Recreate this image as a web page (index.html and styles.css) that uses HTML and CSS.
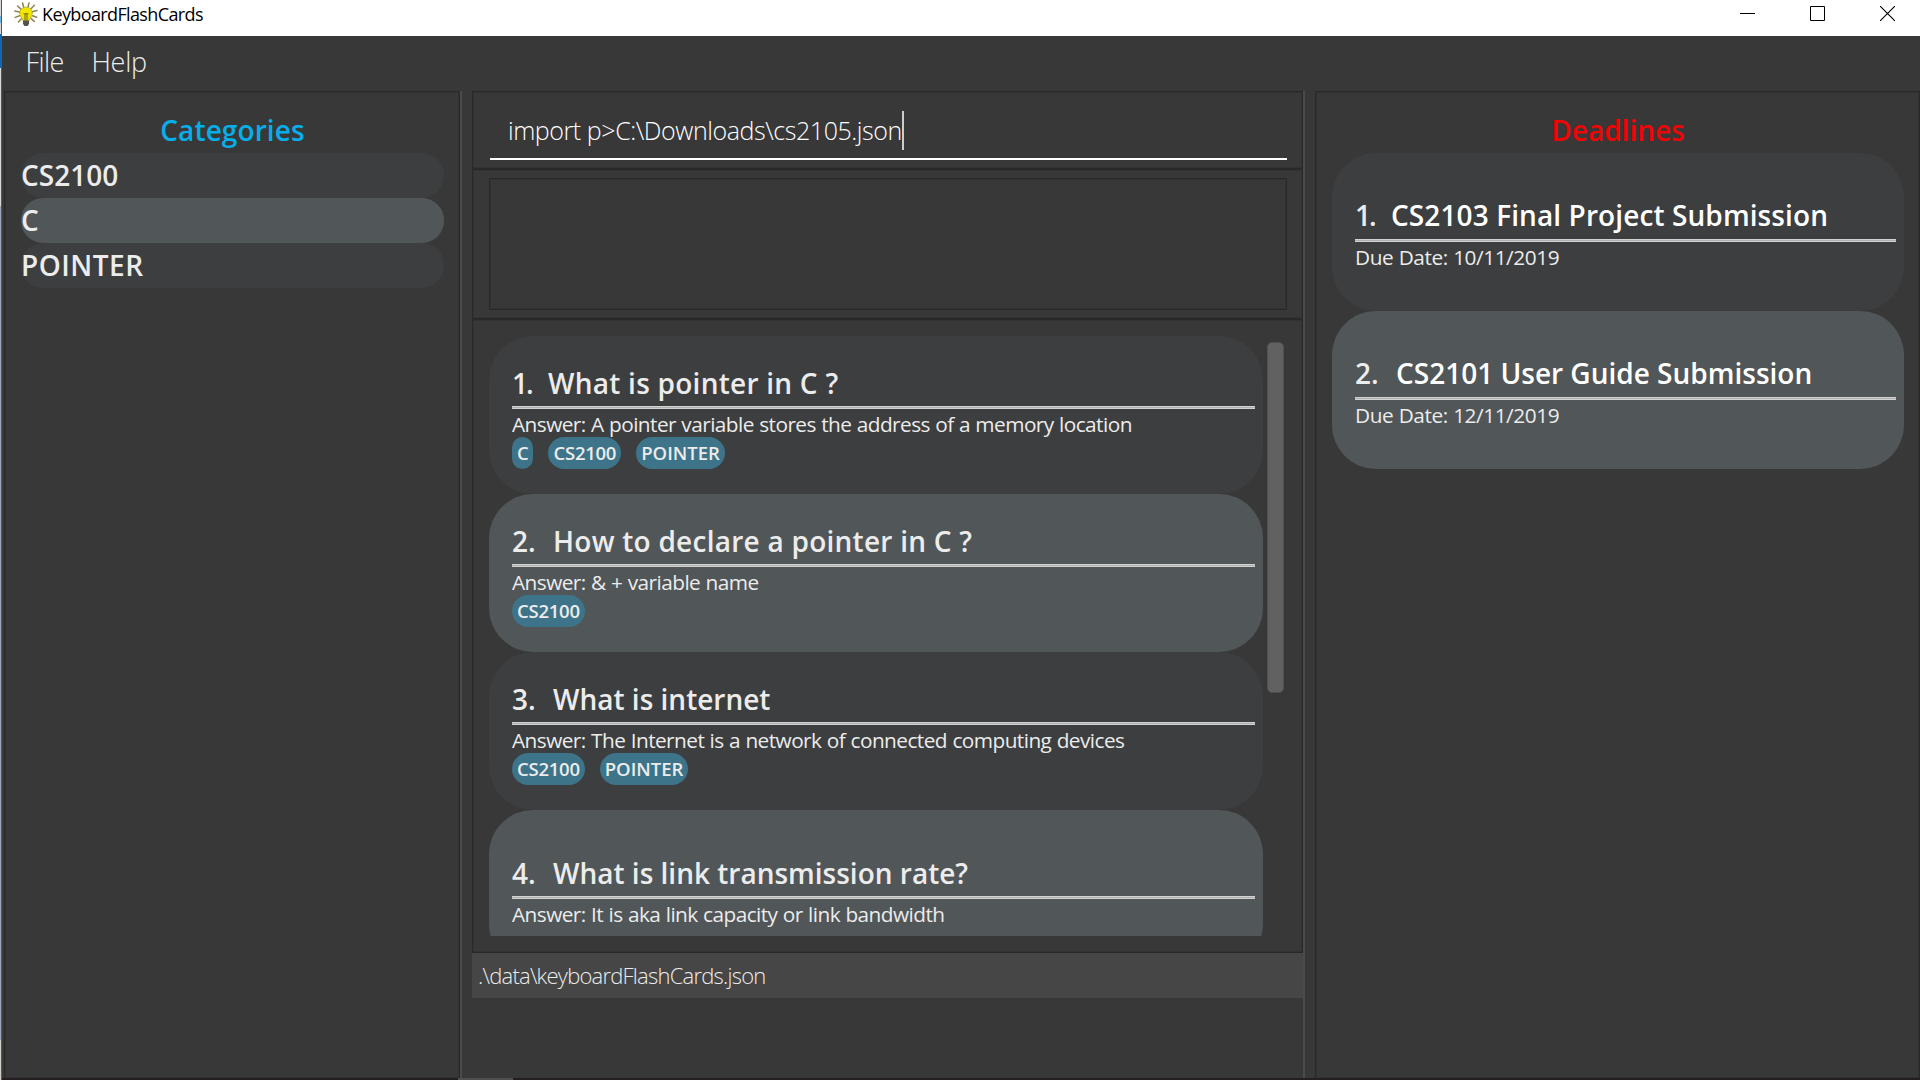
FILE: index.html
```html
<!DOCTYPE html>
<html lang="en">
<head>
<meta charset="utf-8">
<title>KeyboardFlashCards</title>
<link rel="stylesheet" href="styles.css">
</head>
<body>
<div class="desktop-edge"></div>
<div class="window">
  <header class="titlebar">
    <svg class="app-icon" width="24" height="24" viewBox="0 0 24 24">
      <g stroke="#8f8550" stroke-width="1.5" stroke-linecap="round">
        <path d="M8.6 1l1 4M15 1l-1 4M3.6 4l3.6 3.4M20.4 3.2L17 6.8M.8 9l4.6 1M23 8.6l-4.6 1.2M1.2 15.4l4.4-1.6M22.6 15.2l-4-1.4M4.4 20l3-3.2M20.2 19.4l-3.2-3"/>
      </g>
      <path d="M12 5.2c-3.8 0-6.3 2.6-6.3 5.9 0 3.8 3 4.7 3.5 8h5.6c.5-3.3 3.5-4.2 3.5-8 0-3.3-2.5-5.9-6.3-5.9z" fill="#f3e600" stroke="#a89d1c" stroke-width=".7"/>
      <path d="M9.600 11l1.400 1.600 1-1.600 1 1.600 1.400-1.600M11 12.600v6M13 12.600v6" fill="none" stroke="#6e6614" stroke-width="1"/>
      <path d="M9 18.600h6v3.200L13.600 24h-3.200L9 21.800z" fill="#55524a"/>
    </svg>
    <span class="app-title">KeyboardFlashCards</span>
    <div class="window-buttons">
      <svg width="15" height="15" viewBox="0 0 15 15"><path d="M0 7.500h15" stroke="#000"/></svg>
      <svg width="15" height="15" viewBox="0 0 15 15"><path d="M.5.500h14v14H.5z" fill="none" stroke="#000"/></svg>
      <svg width="15" height="15" viewBox="0 0 15 15"><path d="M0 0l15 15M15 0L0 15" stroke="#000" stroke-width="1.100"/></svg>
    </div>
  </header>
  <nav class="menubar"><span class="menu-file">File</span><span class="menu-help">Help</span></nav>
  <main class="panes">
    <section class="pane side-pane categories">
      <h2 class="pane-title blue">Categories</h2>
      <ul class="category-list">
        <li>CS2100</li>
        <li class="alt">C</li>
        <li class="wide">POINTER</li>
      </ul>
    </section>
    <div class="divider"></div>
    <section class="center">
      <div class="pane command">
        <div class="command-field"><span class="command-text">import p&gt;C:\Downloads\cs2105.json</span><i class="caret"></i></div>
      </div>
      <div class="pane result"><div class="pane result-box"></div></div>
      <div class="pane flashcards">
        <div class="card-list">
          <article class="card">
            <h3 class="card-title wider"><span class="num one">1.</span>What is pointer in C ?</h3>
            <p class="card-text">Answer: A pointer variable stores the address of a memory location</p>
            <div class="tags"><span class="tag">C</span><span class="tag">CS2100</span><span class="tag long">POINTER</span></div>
          </article>
          <article class="card alt">
            <h3 class="card-title wider"><span class="num">2.</span>How to declare a pointer in C ?</h3>
            <p class="card-text">Answer: &amp; + variable name</p>
            <div class="tags"><span class="tag">CS2100</span></div>
          </article>
          <article class="card">
            <h3 class="card-title"><span class="num">3.</span>What is internet</h3>
            <p class="card-text">Answer: The Internet is a network of connected computing devices</p>
            <div class="tags"><span class="tag">CS2100</span><span class="tag long">POINTER</span></div>
          </article>
          <article class="card alt roomy">
            <h3 class="card-title"><span class="num">4.</span>What is link transmission rate?</h3>
            <p class="card-text">Answer: It is aka link capacity or link bandwidth</p>
          </article>
        </div>
        <div class="scroll-thumb"></div>
      </div>
      <footer class="statusbar">.\data\keyboardFlashCards.json</footer>
    </section>
    <div class="divider"></div>
    <section class="pane side-pane deadlines">
      <h2 class="pane-title red">Deadlines</h2>
      <article class="card roomy">
        <h3 class="card-title bright wide-title"><span class="num one">1.</span>CS2103 Final Project Submission</h3>
        <p class="card-text">Due Date: 10/11/2019</p>
      </article>
      <article class="card alt roomy">
        <h3 class="card-title bright"><span class="num">2.</span>CS2101 User Guide Submission</h3>
        <p class="card-text">Due Date: 12/11/2019</p>
      </article>
    </section>
  </main>
  <div class="taskbar-edge"><i></i></div>
</div>
</body>
</html>
```
FILE: styles.css
```css
* { box-sizing: border-box; margin: 0; padding: 0; }
body {
  display: flex;
  width: 1920px;
  height: 1080px;
  overflow: hidden;
  background: #383838;
  font-family: "Open Sans", "Noto Sans", sans-serif;
  color: #ececec;
}
.desktop-edge {
  width: 2px;
  border-right: 1px solid #55585a;
  background: linear-gradient(#d5d8da 0 16px, #6fb0dc 16px 23px, #d5d8da 23px 34px, #0f66b4 34px 68px, #d6d6d4 68px 206px, #9aa6b8 206px 1040px, #d0d0c8 1040px);
}
.window { flex: 1; min-width: 0; display: flex; flex-direction: column; }

.titlebar {
  display: flex;
  align-items: flex-start;
  height: 36px;
  padding: 1px 25px 0 12px;
  background: #fff;
  color: #000;
}
.app-icon { margin-top: 1px; }
.app-title { margin-left: 3px; padding-left: 1px; font-size: 18px; line-height: 26px; letter-spacing: -0.62px; }
.window-buttons { display: flex; gap: 55px; margin-left: auto; padding-top: 5px; }

.menubar {
  display: flex;
  height: 55px;
  padding: 5px 0 0 23.5px;
  font-size: 27px;
  font-weight: 300;
  line-height: 42px;
}
.menu-file { width: 66px; letter-spacing: -0.6px; }
.menu-help { letter-spacing: -0.3px; }

.panes { display: flex; flex: 1; min-height: 0; padding-left: 2px; }
.pane { border: 1px solid #292929; box-shadow: inset 0 0 0 1px #323232; }
.divider { width: 2px; margin-right: 10px; background: #4b4b4b; }
.side-pane { border-bottom: 0; }
.categories { width: 456px; padding: 18px 15px 0 16px; }
.deadlines { flex: 1; padding: 18px 15px 0 16px; }
.pane-title {
  height: 43px;
  text-align: center;
  font-size: 28px;
  font-weight: 600;
  line-height: 40px;
  letter-spacing: 0.1px;
}
.blue { color: #06aeea; }
.red { color: #ee0505; letter-spacing: 0; }

.category-list { list-style: none; }
.category-list li {
  height: 45px;
  border-radius: 22px;
  background: #3c3e3f;
  font-size: 28px;
  font-weight: 590;
  line-height: 44px;
}
.category-list .alt, .card.alt { background: #515658; }
.category-list .wide { letter-spacing: 0.5px; }

.center { display: flex; flex-direction: column; width: 831px; }
.command { height: 78px; padding: 15px 15px 0 17px; }
.command-field {
  display: flex;
  align-items: flex-start;
  height: 53px;
  padding: 4px 0 0 18px;
  border-bottom: 2px solid #fff;
  color: #fff;
  font-size: 25px;
  font-weight: 300;
  line-height: 39px;
  letter-spacing: -0.43px;
}
.caret { width: 2px; height: 39px; background: #ccc; }
.result { height: 150px; padding: 8px 15px 8px 16px; }
.result-box { height: 132px; }
.flashcards { display: flex; align-items: flex-start; gap: 4px; height: 634px; padding: 16px 17px 0 16px; }
.card-list { width: 774px; height: 600px; overflow: hidden; }
.scroll-thumb { width: 17px; height: 351px; margin-top: 6px; border: 1px solid #505050; border-radius: 5px; background: #616161; }

.card { height: 158px; padding: 27px 8px 0 23px; border-radius: 44px; background: #3c3e3f; }
.card.roomy { padding-top: 43px; }
.card-title {
  display: flex;
  height: 46px;
  border-bottom: 3px double #d2d2d2;
  background: linear-gradient(#b0b0b0, #b0b0b0) 0 100% / 100% 3px no-repeat border-box;
  font-size: 28px;
  font-weight: 590;
  line-height: 40px;
  white-space: pre;
}
.wider { letter-spacing: 0.25px; }
.bright { color: #fff; line-height: 38px; }
.wide-title { letter-spacing: 0.1px; }
.num { width: 41px; color: #ececec; letter-spacing: 0; }
.num.one { width: 36px; letter-spacing: -2px; }
.card-text {
  padding-top: 2px;
  font-size: 20.8px;
  line-height: 26px;
  letter-spacing: -0.55px;
  word-spacing: 0.5px;
  white-space: nowrap;
}
.deadlines .card-text { letter-spacing: -0.44px; }
.tags { display: flex; gap: 15px; }
.tag {
  height: 32px;
  padding: 0 5px;
  border-radius: 16px;
  background: #3e7489;
  font-size: 18.5px;
  font-weight: 580;
  line-height: 31px;
  letter-spacing: -0.25px;
}
.tag.long { letter-spacing: 0; }

.statusbar {
  height: 45px;
  padding-left: 6px;
  background: #464646;
  font-size: 22px;
  font-weight: 300;
  line-height: 45px;
  letter-spacing: -0.77px;
}
.taskbar-edge { height: 2px; padding-left: 456px; background: #231f20; }
.taskbar-edge i { display: block; width: 55px; height: 2px; background: #505050; }
```
